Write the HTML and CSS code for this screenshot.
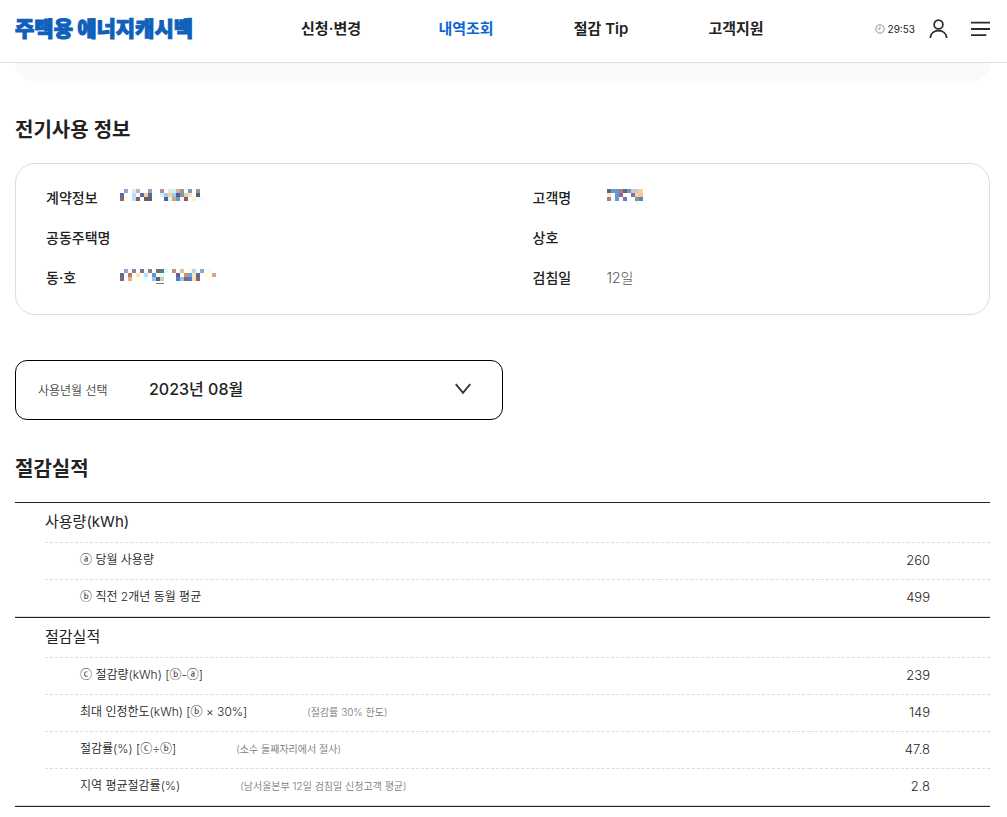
FILE: index.html
```html
<!DOCTYPE html>
<html lang="ko">
<head>
<meta charset="utf-8">
<meta name="viewport" content="width=device-width, initial-scale=1">
<title>주택용 에너지캐시백</title>
<link rel="stylesheet" href="styles.css">
</head>
<body>
<header class="header">
  <a class="logo" href="#">주택용 에너지캐시백</a>
  <nav class="nav">
    <a href="#">신청·변경</a>
    <a href="#" class="active" aria-current="page">내역조회</a>
    <a href="#">절감 Tip</a>
    <a href="#">고객지원</a>
  </nav>
  <div class="tools">
    <span class="timer">
      <svg width="10" height="10" viewBox="0 0 10 10" fill="none" stroke="#888" aria-hidden="true"><circle cx="5" cy="5" r="4.2" stroke-width=".9"/><path d="M5 2.6V5H2.8" stroke-width=".9"/></svg>
      <span>29:53</span>
    </span>
    <button class="icon-button" type="button" aria-label="내 정보">
      <svg width="19" height="20" viewBox="0 0 19 20" fill="none" stroke="#2b2b33" stroke-width="1.7" aria-hidden="true"><circle cx="9.5" cy="5.5" r="4.4"/><path d="M1.3 19C1.6 14.4 5 11.6 9.5 11.6S17.400 14.400 17.700 19"/></svg>
    </button>
    <button class="icon-button" type="button" aria-label="전체 메뉴">
      <svg width="19" height="20" viewBox="0 0 19 20" fill="none" stroke="#2b2b33" stroke-width="1.8" aria-hidden="true"><path d="M0 3.700H19M0 10H19M0 16.200H15.300"/></svg>
    </button>
  </div>
</header>

<main class="content">
  <div class="notice-end"></div>

  <section>
    <h2 class="title">전기사용 정보</h2>
    <div class="info">
      <dl class="info-list">
        <div><dt>계약정보</dt><dd>
          <svg class="mosaic" width="96" height="16" viewBox="0 0 24 4" role="img" aria-label="비공개">
            <path fill="#8fa9cc" d="M1 0h1v1h-1z"/><path fill="#cfeeff" d="M3 0h1v1h-1zM13 0h1v1h-1zM10 1h1v1h-1z"/><path fill="#cfb2a3" d="M4 0h1v1h-1zM14 0h1v1h-1z"/><path fill="#9a9cc4" d="M7 0h1v1h-1z"/><path fill="#ad9389" d="M10 0h1v1h-1z"/><path fill="#f7e0c8" d="M12 0h1v1h-1zM17 1h1v1h-1z"/><path fill="#969696" d="M15 0h1v1h-1zM19 0h1v1h-1z"/><path fill="#8197b0" d="M17 0h1v1h-1z"/>
            <path fill="#5e68a0" d="M0 1h1v1h-1zM5 1h1v1h-1zM7 1h1v1h-1z"/><path fill="#b0e2ff" d="M3 1h1v2h-1z"/><path fill="#f8cb97" d="M6 1h1v1h-1zM12 1h1v1h-1zM16 1h1v1h-1z"/><path fill="#98ceff" d="M11 1h1v1h-1zM13 1h1v1h-1z"/><path fill="#5d5a8c" d="M14 1h1v1h-1zM11 2h1v1h-1z"/><path fill="#7599bc" d="M15 1h1v1h-1z"/><path fill="#5b626c" d="M19 1h1v1h-1zM6 2h2v1h-2z"/>
            <path fill="#91606f" d="M0 2h1v1h-1z"/><path fill="#855e60" d="M4 2h1v1h-1z"/><path fill="#c8ffff" d="M12 2h1v1h-1z"/><path fill="#daa472" d="M13 2h1v1h-1z"/><path fill="#659ad0" d="M14 2h1v1h-1z"/><path fill="#fffac5" d="M15 2h1v1h-1z"/><path fill="#7c5a7c" d="M16 2h1v1h-1z"/><path fill="#fff0d0" d="M18 2h1v1h-1z"/><path fill="#e8ffff" d="M20 2h1v1h-1z"/><path fill="#fffdf0" d="M1 2h1v1h-1z"/>
          </svg></dd></div>
        <div><dt>공동주택명</dt><dd></dd></div>
        <div><dt>동·호</dt><dd>
          <svg class="mosaic" width="96" height="16" viewBox="0 0 24 4" role="img" aria-label="비공개">
            <path fill="#8fa9cc" d="M1 0h1v1h-1zM20 0h1v1h-1z"/><path fill="#7c8ba4" d="M3 0h1v1h-1z"/><path fill="#74758a" d="M5 0h1v1h-1z"/><path fill="#8c8279" d="M7 0h1v1h-1z"/><path fill="#65767b" d="M9 0h2v1h-2z"/><path fill="#cbffff" d="M11 0h1v1h-1zM10 1h1v1h-1z"/><path fill="#b39985" d="M13 0h1v1h-1z"/><path fill="#e0c2b0" d="M15 0h1v1h-1z"/><path fill="#b4d8f2" d="M18 0h1v1h-1z"/><path fill="#fffbe0" d="M17 0h1v1h-1zM22 0h1v1h-1zM4 2h1v1h-1zM21 1h1v1h-1zM22 2h1v1h-1z"/>
            <path fill="#5e68a0" d="M0 1h1v1h-1zM19 1h1v1h-1z"/><path fill="#b47e6c" d="M2 1h1v1h-1z"/><path fill="#ffe3b5" d="M4 1h1v1h-1zM18 1h1v2h-1z"/><path fill="#b0e2ff" d="M6 1h1v1h-1z"/><path fill="#6094d5" d="M8 1h1v1h-1z"/><path fill="#755780" d="M14 1h1v1h-1z"/><path fill="#cb9464" d="M16 1h1v1h-1z"/><path fill="#6ea6da" d="M17 1h1v1h-1z"/><path fill="#d9a587" d="M23 1h1v1h-1z"/>
            <path fill="#91606f" d="M0 2h1v1h-1zM16 2h1v1h-1zM19 2h1v1h-1z"/><path fill="#e6b07c" d="M2 2h1v1h-1z"/><path fill="#e0ffff" d="M6 2h1v1h-1z"/><path fill="#88c8ff" d="M8 2h1v1h-1zM15 2h1v1h-1z"/><path fill="#5b636c" d="M9 2h1v1h-1z"/><path fill="#cccfba" d="M10 2h1v1h-1z"/><path fill="#4f80c4" d="M14 2h1v1h-1zM17 2h1v1h-1z"/><path fill="#77777f" d="M9 3.500h2v.25h-2z"/>
          </svg></dd></div>
      </dl>
      <dl class="info-list">
        <div><dt>고객명</dt><dd>
          <svg class="mosaic" width="36" height="16" viewBox="0 0 9 4" role="img" aria-label="비공개">
            <path fill="#5f6a74" d="M0 0h1v1h-1zM4 0h1v1h-1z"/><path fill="#649bd3" d="M1 0h2v3h-1v-2h-1z"/><path fill="#b07c80" d="M3 0h1v1h-1zM0 2h1v1h-1z"/><path fill="#7092c4" d="M5 0h1v1h-1z"/><path fill="#c9cccb" d="M6 0h2v1h-2z"/><path fill="#ffcf9c" d="M8 0h1v1h-1zM7 1h1v1h-1z"/>
            <path fill="#ffe6c8" d="M0 1h1v1h-1z"/><path fill="#98608a" d="M3 1h1v1h-1z"/><path fill="#7874ac" d="M6 1h1v1h-1zM4 2h1v1h-1z"/><path fill="#f0c49c" d="M8 1h1v1h-1z"/><path fill="#8096a0" d="M7 2h1v1h-1z"/><path fill="#6a80ac" d="M8 2h1v1h-1z"/><path fill="#f8f4f4" d="M7 3h1v1h-1z"/>
          </svg></dd></div>
        <div><dt>상호</dt><dd></dd></div>
        <div><dt>검침일</dt><dd>12일</dd></div>
      </dl>
    </div>
  </section>

  <div class="month">
    <label for="month">사용년월 선택</label>
    <select id="month"><option>2023년 08월</option></select>
    <svg class="chevron" width="16" height="12" viewBox="0 0 16 12" fill="none" stroke="#333" stroke-width="1.8" aria-hidden="true"><path d="M.8 1.200L8 9.800L15.200 1.200"/></svg>
  </div>

  <section>
    <h2 class="title">절감실적</h2>
    <div class="results">
      <div class="group">
        <table>
          <thead><tr><th colspan="2" scope="colgroup">사용량(kWh)</th></tr></thead>
          <tbody>
            <tr><th scope="row">ⓐ 당월 사용량</th><td>260</td></tr>
            <tr><th scope="row">ⓑ 직전 2개년 동월 평균</th><td>499</td></tr>
          </tbody>
        </table>
      </div>
      <div class="group">
        <table>
          <thead><tr><th colspan="2" scope="colgroup">절감실적</th></tr></thead>
          <tbody>
            <tr><th scope="row">ⓒ 절감량(kWh) [ⓑ-ⓐ]</th><td>239</td></tr>
            <tr><th scope="row">최대 인정한도(kWh) [ⓑ × 30%]<small>(절감률 30% 한도)</small></th><td>149</td></tr>
            <tr><th scope="row">절감률(%) [ⓒ÷ⓑ]<small>(소수 둘째자리에서 절사)</small></th><td>47.8</td></tr>
            <tr><th scope="row">지역 평균절감률(%)<small>(남서울본부 12일 검침일 신청고객 평균)</small></th><td>2.8</td></tr>
          </tbody>
        </table>
      </div>
    </div>
  </section>
</main>
</body>
</html>
```

FILE: styles.css
```css
* {
  box-sizing: border-box;
}

body {
  margin: 0;
  background: #fff;
  color: #222;
  font-family: Inter, "Noto Sans CJK KR", sans-serif;
  font-size: 14px;
}

a {
  color: inherit;
  text-decoration: none;
}

.header {
  position: sticky;
  top: 0;
  z-index: 1;
  display: grid;
  grid-template-columns: 4fr 540px 3fr;
  align-items: center;
  height: 63px;
  padding: 0 17px 4px 15px;
  border-bottom: 1px solid #e0e0e0;
  background: #fff;
}

.logo {
  color: #0f60bb;
  font-size: 21px;
  font-weight: 900;
  line-height: 30px;
  white-space: nowrap;
  -webkit-text-stroke: 1px #0f60bb;
}

.nav {
  display: grid;
  grid-template-columns: repeat(4, 1fr);
  font-size: 15px;
  font-weight: 600;
  line-height: 24px;
  text-align: center;
}

.nav .active {
  color: #0c67d4;
}

.tools {
  display: flex;
  align-items: center;
  justify-content: flex-end;
  gap: 23px;
}

.timer {
  display: flex;
  align-items: center;
  gap: 3px;
  margin-right: -9px;
  font-size: 10px;
  line-height: 16px;
}

.icon-button {
  display: flex;
  padding: 0;
  border: 0;
  background: none;
}

.content {
  padding: 0 17px 10px 15px;
}

.notice-end {
  height: 18px;
  border-radius: 0 0 20px 20px;
  background: #fafafa;
}

.title {
  margin: 34px 0 18px;
  font-size: 20px;
  font-weight: 600;
  line-height: 30px;
}

.info {
  display: grid;
  grid-template-columns: 1fr 1fr;
  padding: 13px 0 17px;
  border: 1px solid #ddd;
  border-radius: 20px;
}

.info-list {
  margin: 0;
  padding-left: 30px;
}

.info-list div {
  display: flex;
  align-items: center;
  height: 40px;
}

.info-list dt {
  width: 74px;
  font-weight: 500;
}

.info-list dd {
  margin: 0;
  color: #555;
  font-weight: 300;
}

.mosaic {
  display: block;
  shape-rendering: crispEdges;
}

.month {
  position: relative;
  display: flex;
  align-items: center;
  width: 50%;
  height: 60px;
  margin-top: 45px;
  padding-bottom: 2px;
  border: 1px solid #000;
  border-radius: 12px;
}

.month label {
  width: 133px;
  padding-left: 22px;
  color: #444;
  font-size: 12px;
  font-weight: 350;
}

.month select {
  flex: 1;
  height: 100%;
  padding: 0;
  border: 0;
  background: none;
  color: #222;
  font: 500 16px Inter, "Noto Sans CJK KR", sans-serif;
  appearance: none;
}

.chevron {
  position: absolute;
  right: 31px;
  pointer-events: none;
}

.results {
  border-bottom: 1px solid #222;
}

.group {
  padding-left: 30px;
  border-top: 1px solid #222;
  border-bottom: 1px solid #ddd;
}

.group table {
  width: 100%;
  border-spacing: 0;
}

.group th,
.group td {
  height: 37px;
  padding: 0 0 2px;
  border-bottom: 1px dashed #ddd;
  font-size: 12px;
  font-weight: 350;
  line-height: 20px;
  text-align: left;
}

.group thead th {
  height: 40px;
  font-size: 15px;
  font-weight: 400;
}

.group tbody th {
  padding-left: 35px;
}

.group td {
  padding-right: 60px;
  font-size: 13px;
  text-align: right;
}

.group tbody tr:last-child td,
.group tbody tr:last-child th {
  height: 36px;
  border-bottom: 0;
}

.group small {
  margin-left: 60px;
  color: #777;
  font-size: 10px;
}
```
